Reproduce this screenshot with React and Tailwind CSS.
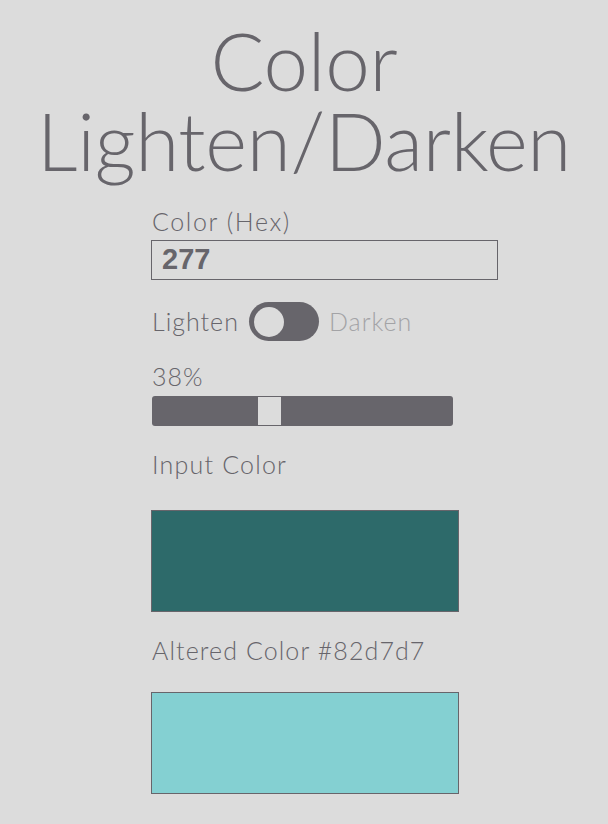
export default function App() {
  const pct = 38;
  return (
    <div className="min-h-screen w-full bg-[#dcdcdc] text-[#67656b] font-['Lato','Open_Sans',sans-serif] pb-8">
      <h1 className="pt-[20px] text-center text-[80px] leading-[80px] font-light tracking-[-0.3px]">
        Color
        <br />
        Lighten/Darken
      </h1>
      <div className="ml-[151px] w-[347px] mt-[26px]">
        <label className="block pl-[1px] text-[25px] leading-[30px] font-light tracking-[1.6px]">Color (Hex)</label>
        <input
          defaultValue="277"
          className="mt-[4px] block w-[347px] h-[40px] border border-[#67656b] bg-transparent px-[10px] text-[29px] font-bold font-['Liberation_Sans',Arial,sans-serif] text-[#67656b] outline-none"
        />
        <div className="mt-[22px] flex items-center pl-[1px]">
          <span className="text-[25px] font-light tracking-[1px]">Lighten</span>
          <div className="ml-[10px] w-[70px] h-[39px] rounded-full bg-[#67656b] flex items-center pl-[5px]">
            <div className="w-[30px] h-[30px] rounded-full bg-[#dcdcdc]" />
          </div>
          <span className="ml-[10px] text-[25px] font-light tracking-[1px] text-[#a3a3a6]">Darken</span>
        </div>
        <div className="mt-[21px] pl-[1px] text-[25px] leading-[28px] font-light tracking-[1px]">{pct}%</div>
        <div className="mt-[6px] ml-[1px] w-[301px] h-[30px] rounded-[3px] bg-[#67656b] flex items-center">
          <div className="ml-[106px] w-[23px] h-[28px] bg-[#dcdcdc]" />
        </div>
        <div className="mt-[23px] pl-[1px] text-[25px] leading-[30px] font-light tracking-[1.2px]">Input Color</div>
        <div className="mt-[31px] w-[308px] h-[102px] border border-[#67656b] bg-[#2d6a6a]" />
        <div className="mt-[23px] pl-[1px] text-[25px] leading-[30px] font-light tracking-[1.1px]">Altered Color #82d7d7</div>
        <div className="mt-[27px] w-[308px] h-[102px] border border-[#67656b] bg-[#84d0d2]" />
      </div>
    </div>
  );
}
